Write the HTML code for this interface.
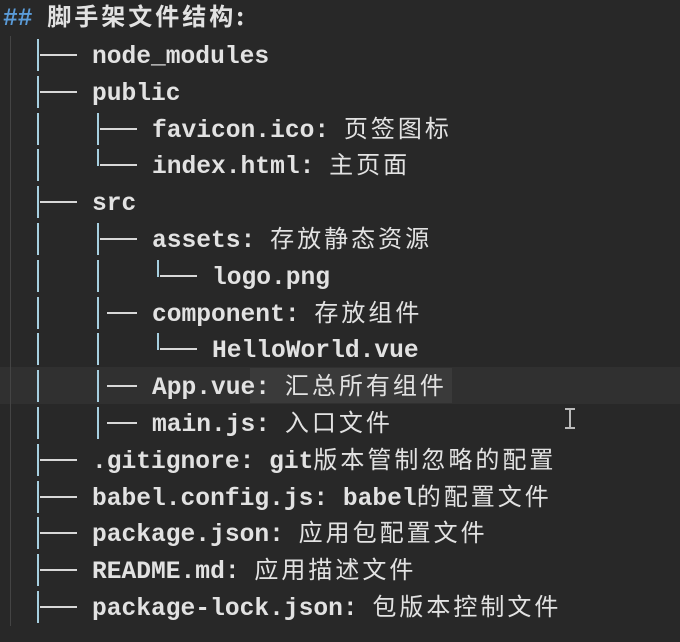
<!DOCTYPE html><html><head><meta charset="utf-8"><style>
body{margin:0;width:680px;height:642px;background:#282828;overflow:hidden;position:relative;font-family:"Liberation Mono","Noto Sans CJK SC",monospace;font-weight:bold;color:#e2e2e2}
.t{position:absolute;font-size:24.6px;line-height:36px;height:36px;white-space:pre}
.c{font-family:"Noto Sans CJK SC",sans-serif;font-weight:normal;letter-spacing:3px;font-size:24px;line-height:0}
.v{position:absolute;width:2px;background:#a6cfe0}
.h{position:absolute;height:2px;background:#d8d8d8}
</style></head><body>
<div style="position:absolute;left:0;top:367px;width:680px;height:37px;background:#303030"></div>
<div style="position:absolute;left:250px;top:368px;width:202px;height:35px;background:#3a3a3a"></div>
<div style="position:absolute;left:10px;top:36px;width:1px;height:590px;background:#444"></div>
<div class="t" style="left:3px;top:2px"><span style="color:#5a9bd8">##</span> <span class="c" style="font-weight:bold">脚手架文件结构:</span></div>
<div id="tree"></div>
<div style="position:absolute;left:569px;top:409px;width:2px;height:19px;background:#bbb"></div>
<div style="position:absolute;left:565px;top:408px;width:10px;height:2px;background:#bbb"></div>
<div style="position:absolute;left:565px;top:427px;width:10px;height:2px;background:#bbb"></div>
<script>
var rows=[[1,'├','node_modules',''],[1,'├','public',''],[2,'├','favicon.ico: ','页签图标'],[2,'└','index.html: ','主页面'],[1,'├','src',''],[2,'├','assets: ','存放静态资源'],[3,'└','logo.png',''],[2,'|','component: ','存放组件'],[3,'└','HelloWorld.vue',''],[2,'|','App.vue: ','汇总所有组件'],[2,'|','main.js: ','入口文件'],[1,'├','.gitignore: ','git版本管制忽略的配置'],[1,'├','babel.config.js: ','babel的配置文件'],[1,'├','package.json: ','应用包配置文件'],[1,'├','README.md: ','应用描述文件'],[1,'├','package-lock.json: ','包版本控制文件']];
function fmt(s){return s.replace(/([\u4e00-\u9fff]+)/g,'<span class="c">$1</span>');}
var h='';
rows.forEach(function(r,i){var yc=55+36.8*i;var lv=r[0];
 h+='<div class="v" style="left:37px;top:'+(yc-16)+'px;height:32px"></div>';
 if(lv>=2){var bx=97;
  if(r[1]=='└')h+='<div class="v" style="left:'+bx+'px;top:'+(yc-16)+'px;height:17px"></div>';
  else h+='<div class="v" style="left:'+bx+'px;top:'+(yc-16)+'px;height:32px"></div>';}
 if(lv==3){h+='<div class="v" style="left:97px;top:'+(yc-16)+'px;height:32px"></div><div class="v" style="left:157px;top:'+(yc-16)+'px;height:17px"></div>';}
 var hx=[0,40,100,160][lv];
 var start=(r[1]=='|')?hx+7:hx;
 h+='<div class="h" style="left:'+start+'px;top:'+(yc-1)+'px;width:'+(hx+37-start)+'px"></div>';
 var tx=[0,92,152,212][lv];
 h+='<div class="t" style="left:'+tx+'px;top:'+(yc-15)+'px">'+r[2]+fmt(r[3])+'</div>';
});
document.getElementById('tree').innerHTML=h;
</script>
</body></html>
